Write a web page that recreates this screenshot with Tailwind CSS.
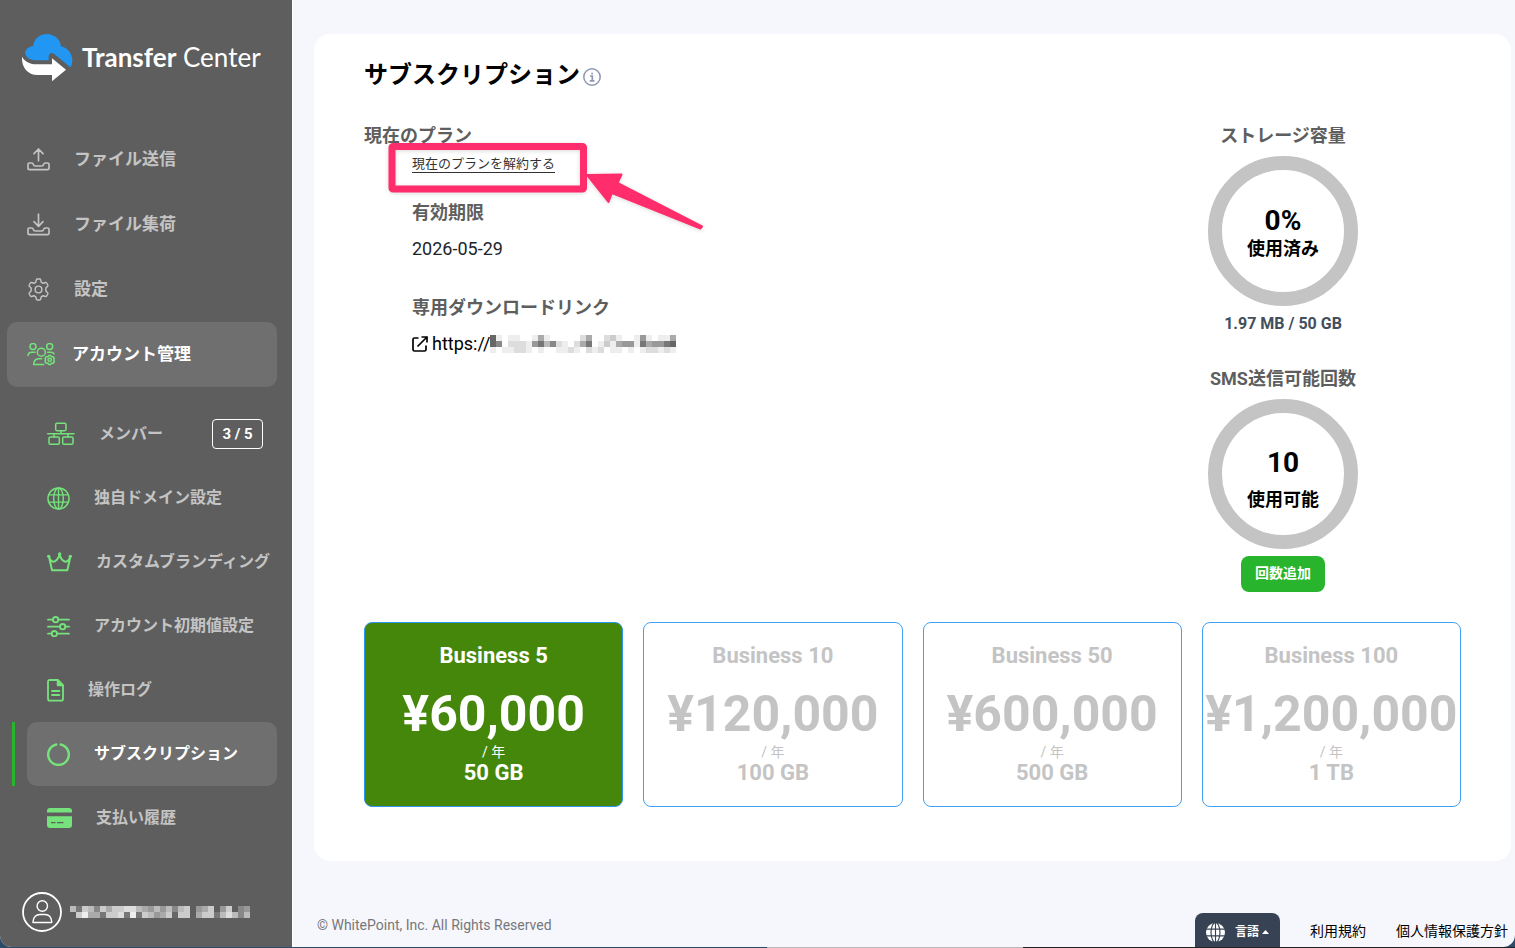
<!DOCTYPE html>
<html lang="ja">
<head>
<meta charset="utf-8">
<meta name="viewport" content="width=device-width, initial-scale=1">
<title>Transfer Center - サブスクリプション</title>
<script src="https://cdn.jsdelivr.net/npm/@tailwindcss/browser@4"></script>
</head>
<body class="bg-[#2d4a66] font-['Roboto','Noto_Sans_CJK_JP',sans-serif] text-black">
<div class="flex min-h-screen flex-col">
<div class="flex grow overflow-hidden rounded-b-xl bg-[#f6f7fc]">

  <!-- Sidebar -->
  <aside class="flex w-[292px] shrink-0 flex-col bg-[#5e5e5e] text-[#c4c4c4]">
    <a href="#" class="flex h-[127px] items-start gap-2 pt-8 pl-5" aria-label="Transfer Center">
      <svg class="h-[50px] w-[54px] shrink-0" viewBox="60 65 162 150">
        <path fill="#2196f3" d="M75 126C80 113 90 108 99 108C102 84 120 71 141 71C162 71 181 86 183 108C203 112 217 130 217 150C217 158 215 166 211 171L162 130C155 125 146 130 146 138V150H105C88 149 77 141 75 126Z"/>
        <path fill="#fff" d="M66 139C76 156 90 161 110 162H156V144L198 178L156 213V194H112C84 193 64 172 66 139Z"/>
      </svg>
      <span class="pt-2 font-['Lato',sans-serif] text-[26px] leading-[34px] whitespace-nowrap text-white"><b>Transfer</b> <span class="font-normal">Center</span></span>
    </a>
    <nav class="flex grow flex-col">
      <ul class="px-[7px] text-[17px] font-bold">
        <li><a href="#" class="flex h-[65px] items-center pl-5">
          <span class="w-[47px]"><svg class="size-[23px]" viewBox="80 50 69 69" fill="none" stroke="#c4c4c4" stroke-width="5" stroke-linecap="round" stroke-linejoin="round"><path d="M114.500 88V54M101 67L114.500 53L128 67M94 95H87Q83 95 83 99V110Q83 115 88 115H141Q146 115 146 110V99Q146 95 142 95H135Q131 95 130 99Q129 104 124 104H105Q100 104 99 99Q98 95 94 95Z"/></svg></span>ファイル送信</a></li>
        <li><a href="#" class="flex h-[65px] items-center pl-5">
          <span class="w-[47px]"><svg class="size-[23px]" viewBox="80 50 69 69" fill="none" stroke="#c4c4c4" stroke-width="5" stroke-linecap="round" stroke-linejoin="round"><path d="M114.500 53V88M101 76L114.500 90L128 76M94 95H87Q83 95 83 99V110Q83 115 88 115H141Q146 115 146 110V99Q146 95 142 95H135Q131 95 130 99Q129 104 124 104H105Q100 104 99 99Q98 95 94 95Z"/></svg></span>ファイル集荷</a></li>
        <li><a href="#" class="flex h-[65px] items-center pl-5">
          <span class="w-[47px]"><svg class="size-[23px]" viewBox="0 0 24 24" fill="none" stroke="#c4c4c4" stroke-width="1.500" stroke-linejoin="round"><circle cx="12" cy="12" r="3.500"/><path d="M10.800 1h2.400q.9 0 1.100.9l.5 2.400 2 1.200 2.400-.8q.9-.2 1.300.5l1.200 2.100q.4.8-.2 1.400l-1.800 1.700v3.200l1.800 1.700q.6.600.2 1.400l-1.200 2.100q-.4.700-1.300.5l-2.400-.8-2 1.200-.5 2.400q-.2.900-1.100.9h-2.400q-.9 0-1.100-.9l-.5-2.400-2-1.200-2.400.8q-.9.200-1.300-.5l-1.200-2.100q-.4-.8.2-1.400l1.800-1.700v-3.200L2.500 8.700q-.6-.6-.2-1.400l1.200-2.100q.4-.7 1.300-.5l2.400.8 2-1.200.5-2.400q.2-.9 1.100-.9z"/></svg></span>設定</a></li>
        <li><a href="#" class="mr-2 flex h-[65px] items-center rounded-[10px] bg-[#6f6f6f] pl-5 text-white">
          <span class="w-[45px]"><svg class="h-6 w-7" viewBox="80 634 84 71" fill="none" stroke="#75e27b" stroke-width="4.500" stroke-linecap="round"><circle cx="98" cy="644" r="9"/><circle cx="148" cy="644" r="9"/><circle cx="123" cy="661" r="12"/><path d="M83 671Q84 661 94 661H104M142 661H152Q158 661 161 666M130 698H100Q101 682 114 681H124"/><circle cx="148" cy="684" r="5"/><path stroke-linejoin="round" d="M145 671H151L153 675L159 675L162 680L160 684L162 689L159 694L153 694L151 698H145L143 694L137 694L134 689L136 684L134 680L137 675L143 675Z"/></svg></span>アカウント管理</a></li>
      </ul>
      <ul class="mt-[15px] pl-[27px] text-base font-bold">
        <li><a href="#" class="mr-[29px] flex h-16 items-center gap-6 pl-5">
          <svg class="h-6 w-7 shrink-0" viewBox="141 66 84 72" fill="none" stroke="#75e27b" stroke-width="4.500" stroke-linecap="round"><rect x="167" y="70" width="31" height="22" rx="4"/><rect x="147" y="111" width="31" height="22" rx="4"/><rect x="188" y="111" width="31" height="22" rx="4"/><path d="M143 101H222M183 92V101M162 101V111M204 101V111"/></svg>
          <span class="grow">メンバー</span>
          <span class="flex h-[30px] w-[51px] items-center justify-center rounded border border-white text-[15px] text-white">3 / 5</span></a></li>
        <li><a href="#" class="flex h-16 items-center gap-6 pl-5">
          <svg class="size-[23px] shrink-0" viewBox="0 0 24 24" fill="none" stroke="#75e27b" stroke-width="1.500"><circle cx="12" cy="12" r="11"/><ellipse cx="12" cy="12" rx="5" ry="11"/><path d="M2 8.200H22M2 15.800H22M12 1V23"/></svg>独自ドメイン設定</a></li>
        <li><a href="#" class="flex h-16 items-center gap-6 pl-5 whitespace-nowrap">
          <svg class="h-5 w-[25px] shrink-0" viewBox="141 456 75 60" fill="none" stroke="#75e27b" stroke-width="6" stroke-linejoin="round"><path d="M147 470L156 511H202L211 470Q205 486 196 485Q184 482 179 464Q173 482 161 485Q152 486 147 470Z"/><g fill="#75e27b" stroke="none"><circle cx="146" cy="469" r="5"/><circle cx="179" cy="462" r="5"/><circle cx="211" cy="469" r="5"/></g></svg>カスタムブランディング</a></li>
        <li><a href="#" class="flex h-16 items-center gap-6 pl-5">
          <svg class="h-[21px] w-[23px] shrink-0" viewBox="141 645 67 63" fill="none" stroke="#75e27b" stroke-width="5.500" stroke-linecap="round"><path d="M143 656H158M174 656H206M143 677H179M195 677H206M143 698H154M170 698H206"/><circle cx="166" cy="656" r="8"/><circle cx="187" cy="677" r="8"/><circle cx="162" cy="698" r="8"/></svg>アカウント初期値設定</a></li>
        <li><a href="#" class="flex h-16 items-center gap-6 pl-5">
          <svg class="h-[23px] w-[17px] shrink-0" viewBox="141 85 51 69" fill="none" stroke="#75e27b" stroke-width="5.500" stroke-linecap="round" stroke-linejoin="round"><path d="M148 88H173L189 104V144Q189 150 183 150H150Q144 150 144 144V93Q144 88 148 88Z"/><path fill="#75e27b" d="M173 88V104H189Z"/><path d="M156 121H178M156 133H178"/></svg>操作ログ</a></li>
        <li class="relative"><span class="absolute inset-y-0 -left-[15px] w-[3px] bg-[#29b42d]"></span>
          <a href="#" aria-current="page" class="mr-[15px] flex h-16 items-center gap-6 rounded-[10px] bg-[#6f6f6f] pl-5 text-white">
          <svg class="size-[23px] shrink-0" viewBox="141 277 67 67" fill="none" stroke="#75e27b" stroke-width="7" stroke-linecap="round"><path d="M181 281.500A30 30 0 1 1 168 281.500"/></svg>サブスクリプション</a></li>
        <li><a href="#" class="flex h-16 items-center gap-6 pl-5">
          <svg class="h-5 w-[25px] shrink-0" viewBox="0 0 25 20" fill="#75e27b"><path d="M0 4.500V3Q0 0 3 0H22Q25 0 25 3V4.500ZM0 8.200H25V17Q25 20 22 20H3Q0 20 0 17ZM4 14V15.200H8.500V14ZM10 14V15.200H16.500V14Z"/></svg>支払い履歴</a></li>
      </ul>
      <div class="mt-auto flex items-center gap-2 pb-[15px] pl-[22px]">
        <svg class="size-10 shrink-0" viewBox="0 0 40 40" fill="none" stroke="#fff" stroke-width="1.800"><circle cx="20" cy="20" r="19"/><g stroke-width="1.400" stroke-linejoin="round"><circle cx="20.300" cy="14" r="5.200"/><path d="M11 30.500V29.500Q12 22.500 18 22.500H23Q29 22.500 29.700 29.500V30.500Z"/></g></svg>
        <svg class="h-3 w-[180px]" viewBox="0 0 30 2" shape-rendering="crispEdges" data-mosaic="b7cb8caccddba9b9b8bc 9ac 9c 89| ceaa7ccd7e7cb9ac6cc acc7bdb8b" role="img" aria-label="ユーザー名"></svg>
      </div>
    </nav>
  </aside>

  <!-- Content -->
  <div class="flex min-w-0 grow flex-col border-l border-white">
    <main class="mt-[34px] mr-1 ml-[21px] rounded-2xl bg-white px-[50px] pt-[23px] pb-[54px]">
      <h1 class="flex items-center gap-[3px] text-2xl leading-9 font-bold">サブスクリプション
        <svg class="mt-1 size-[18px]" viewBox="0 0 18 18" fill="none" stroke="#8f96b5" role="img" aria-label="情報"><circle cx="9" cy="9" r="8.200" stroke-width="1.500"/><path stroke-width="1.700" d="M7 8H9.300V12.500M6.700 12.800H11.500M8.200 5.500H10"/></svg></h1>

      <div class="flex pt-[29px]">
        <section class="relative grow">
          <h2 class="text-lg leading-7 font-bold text-[#5e5e5e]">現在のプラン</h2>
          <div class="pl-12">
            <a href="#" class="mt-[6px] block w-fit border-b border-[#333] text-[13px] leading-4 text-[#333]">現在のプランを解約する</a>
            <h2 class="mt-[26px] text-lg leading-7 font-bold text-[#5e5e5e]">有効期限</h2>
            <p class="mt-2 text-lg leading-7 text-[#212529]">2026-05-29</p>
            <h2 class="mt-[31px] text-lg leading-7 font-bold text-[#5e5e5e]">専用ダウンロードリンク</h2>
            <a href="#" class="mt-2 flex items-center text-lg leading-7">
              <svg class="mr-1 size-4" viewBox="0 0 16 16" fill="none" stroke="#000" stroke-width="1.700"><path d="M6.500 2H2.500Q1 2 1 3.500V13.500Q1 15 2.500 15H12.500Q14 15 14 13.500V9.500M9.500 1H15V6.500M15 1L5.500 10.500"/></svg>https://<svg class="h-[18px] w-[186px]" viewBox="0 0 31 3" shape-rendering="crispEdges" data-mosaic="6efeeffeaefffffdaffdceffe9efeea|68fddde97b8defda7fecea99e7a9976|efeeddefeffeedefdedfeefefeddede" role="img" aria-label="非表示のURL"></svg></a>
          </div>
          <!-- Callout over the cancel link -->
          <svg class="pointer-events-none absolute top-[11px] left-4 h-[110px] w-[340px] drop-shadow-sm" viewBox="380 133 340 110" aria-hidden="true">
            <rect x="392" y="146.500" width="191.500" height="42.500" rx="1" fill="none" stroke="#ff2d6b" stroke-width="7"/>
            <path fill="#ff2d6b" stroke="#ff2d6b" stroke-width="2" stroke-linejoin="round" d="M587 175L621.500 174.500L617.500 183L702 226.500L700.500 228.500L612 193L608.500 202Z"/>
          </svg>
        </section>

        <section class="flex w-[356px] shrink-0 flex-col items-center">
          <h2 class="text-lg leading-7 font-bold text-[#5e5e5e]">ストレージ容量</h2>
          <div class="mt-[6px] flex size-[150px] flex-col items-center justify-center rounded-full border-[14px] border-[#c4c4c4] pt-[3px] font-bold">
            <span class="text-[28px] leading-8">0%</span><span class="text-lg leading-6">使用済み</span></div>
          <p class="mt-1 text-base leading-7 font-bold text-[#424f5c]">1.97 MB / 50 GB</p>
          <h2 class="mt-[27px] text-lg leading-7 font-bold text-[#5e5e5e]">SMS送信可能回数</h2>
          <div class="mt-[6px] flex size-[150px] flex-col items-center justify-center gap-[9px] rounded-full border-[14px] border-[#c4c4c4] pt-[10px] font-bold">
            <span class="text-[28px] leading-8">10</span><span class="text-lg leading-6">使用可能</span></div>
          <button class="mt-[7px] h-9 rounded-lg bg-[#28b42c] px-[14px] pb-[2px] text-sm font-bold text-white">回数追加</button>
        </section>
      </div>

      <div class="mt-[30px] grid grid-cols-4 gap-5 text-center whitespace-nowrap text-[#c4c4c4]">
        <button class="flex h-[185px] min-w-0 flex-col items-center rounded-lg border border-[#2f96f0] bg-[#45870b] pt-[17px] text-white">
          <span class="text-[22px] leading-8 font-bold">Business 5</span><span class="mt-[11px] text-[50px] leading-[62px] font-bold">¥60,000</span><span class="text-sm leading-[14px]">/ 年</span><span class="text-[22px] leading-7 font-bold">50 GB</span></button>
        <button class="flex h-[185px] min-w-0 flex-col items-center rounded-lg border border-[#42a0f2] pt-[17px]">
          <span class="text-[22px] leading-8 font-bold">Business 10</span><span class="mt-[11px] text-[50px] leading-[62px] font-bold">¥120,000</span><span class="text-sm leading-[14px]">/ 年</span><span class="text-[22px] leading-7 font-bold">100 GB</span></button>
        <button class="flex h-[185px] min-w-0 flex-col items-center rounded-lg border border-[#42a0f2] pt-[17px]">
          <span class="text-[22px] leading-8 font-bold">Business 50</span><span class="mt-[11px] text-[50px] leading-[62px] font-bold">¥600,000</span><span class="text-sm leading-[14px]">/ 年</span><span class="text-[22px] leading-7 font-bold">500 GB</span></button>
        <button class="flex h-[185px] min-w-0 flex-col items-center rounded-lg border border-[#42a0f2] pt-[17px]">
          <span class="text-[22px] leading-8 font-bold">Business 100</span><span class="mt-[11px] text-[50px] leading-[62px] font-bold">¥1,200,000</span><span class="text-sm leading-[14px]">/ 年</span><span class="text-[22px] leading-7 font-bold">1 TB</span></button>
      </div>
    </main>

    <footer class="mt-auto flex items-end pr-[7px] pl-6 text-sm">
      <p class="grow pb-3 leading-5 text-[#76777a]">© WhitePoint, Inc. All Rights Reserved</p>
      <button class="mr-[30px] flex h-[34px] w-[85px] items-center justify-center gap-[10px] rounded-t-lg bg-[#374354] pt-1 text-xs font-bold text-white">
        <svg class="size-[19px]" viewBox="0 0 20 20"><circle cx="10" cy="10" r="10" fill="#fff"/><g fill="none" stroke="#374354" stroke-width="1.200"><ellipse cx="10" cy="10" rx="4.700" ry="10.500"/><path d="M0 6.500H20M0 13.500H20M10 0V20"/></g></svg>
        <span class="flex items-center gap-[3px]">言語<svg class="h-1 w-[7px]" viewBox="0 0 7 4" fill="#fff"><path d="M0 4L3.500 0L7 4Z"/></svg></span></button>
      <a href="#" class="mr-[30px] pb-[6px] leading-5">利用規約</a>
      <a href="#" class="pb-[6px] leading-5">個人情報保護方針</a>
    </footer>
  </div>
</div>
<!-- Sliver of desktop below the window -->
<div class="flex h-px shrink-0"><span class="w-[767px]"></span><span class="w-[256px] bg-[#b9b9b9]"></span><span class="grow bg-[#222]"></span></div>
</div>
<script>
  // Redacted text: each hex digit is the grey level of one mosaic cell.
  document.querySelectorAll('[data-mosaic]').forEach(function (svg) {
    svg.dataset.mosaic.split('|').forEach(function (row, y) {
      row.split('').forEach(function (c, x) {
        if (c === ' ') return;
        var r = document.createElementNS('http://www.w3.org/2000/svg', 'rect');
        r.setAttribute('x', x); r.setAttribute('y', y);
        r.setAttribute('width', 1); r.setAttribute('height', 1);
        r.setAttribute('fill', '#' + c + c + c);
        svg.appendChild(r);
      });
    });
  });
</script>
</body>
</html>
